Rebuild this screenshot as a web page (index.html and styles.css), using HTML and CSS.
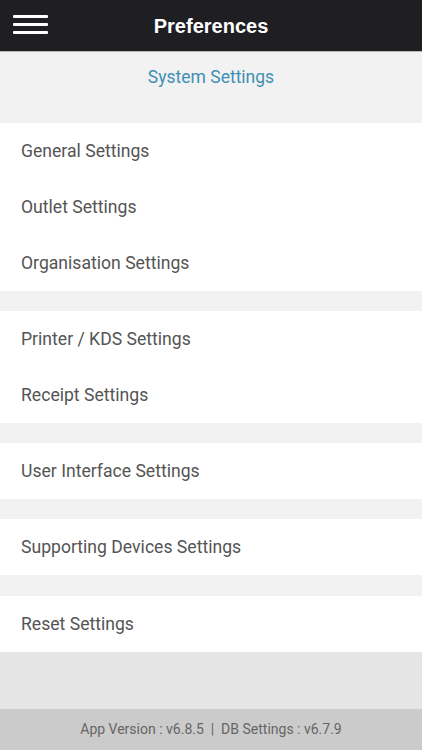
FILE: index.html
```html
<!DOCTYPE html>
<html>
<head>
<meta charset="utf-8">
<link rel="stylesheet" href="styles.css">
</head>
<body>
<div class="app">
  <header class="topbar">
    <div class="menu-btn">
      <svg width="35" height="20" viewBox="0 0 35 20"><rect x="0" y="0" width="35" height="3" rx="1" fill="#fff"/><rect x="0" y="8" width="35" height="3" rx="1" fill="#fff"/><rect x="0" y="16" width="35" height="3" rx="1" fill="#fff"/></svg>
    </div>
    <h1 class="title">Preferences</h1>
  </header>
  <div class="section-title">System Settings</div>
  <div class="group">
    <div class="row">General Settings</div>
    <div class="row">Outlet Settings</div>
    <div class="row">Organisation Settings</div>
  </div>
  <div class="group">
    <div class="row">Printer / KDS Settings</div>
    <div class="row">Receipt Settings</div>
  </div>
  <div class="group">
    <div class="row">User Interface Settings</div>
  </div>
  <div class="group">
    <div class="row">Supporting Devices Settings</div>
  </div>
  <div class="group last">
    <div class="row">Reset Settings</div>
  </div>
  <div class="filler"></div>
  <footer class="footer">App Version : v6.8.5 &nbsp;|&nbsp; DB Settings : v6.7.9</footer>
</div>
</body>
</html>
```
FILE: styles.css
```css
html, body { margin: 0; padding: 0; }
body { font-family: Roboto, "Liberation Sans", sans-serif; background: #f2f2f2; }
.app { width: 422px; height: 750px; display: flex; flex-direction: column; background: #f2f2f2; }
.topbar { height: 51px; background: #1f1f23; border-bottom: 1px solid #b8b8b8; display: flex; align-items: center; justify-content: center; position: relative; flex: none; }
.menu-btn { position: absolute; left: 13px; top: 15px; height: 20px; }
.menu-btn svg { display: block; }
.title { margin: 0; color: #fff; font-family: "Liberation Sans", Arial, sans-serif; font-weight: bold; font-size: 20px; padding-top: 1px; }
.section-title { height: 51px; line-height: 51px; text-align: center; color: #3f8fb3; font-size: 17.5px; margin-bottom: 20px; flex: none; }
.group { background: #fff; margin-bottom: 20px; flex: none; }
.group.last { margin-top: 1px; margin-bottom: 0; }
.row { height: 56px; line-height: 56px; padding-left: 21px; color: #545454; font-size: 17.6px; }
.filler { flex: 1; background: #e5e5e5; }
.footer { height: 41px; line-height: 41px; background: #cbcbcb; color: #666; text-align: center; font-size: 14px; flex: none; }
```
